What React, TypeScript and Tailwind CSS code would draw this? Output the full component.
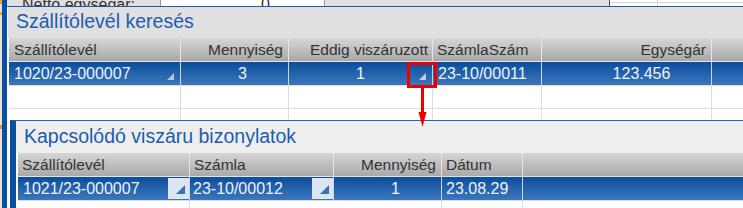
import React from "react";

function Tri({ className, size = 7 }: { className: string; size?: number }) {
  return (
    <svg width={size} height={size} viewBox={`0 0 ${size} ${size}`} className={className}>
      <polygon points={`${size},0 ${size},${size} 0,${size}`} fill="currentColor" />
    </svg>
  );
}

const hdr =
  "h-full flex items-center border-r border-[#e6e6e6] bg-gradient-to-b from-[#d6d6d6] to-[#a9a9a9] text-[15.5px] text-[#333]";
const cell =
  "relative h-full flex items-center border-r border-[#c9d6e6] bg-gradient-to-b from-[#0a4d9c] to-[#3a77bc] text-[16px] text-[#eef2f8]";

function DropBtn() {
  return (
    <div className="absolute right-0 top-[1px] bottom-[1px] w-[21px] bg-[#dce6f2] flex items-end justify-end pr-[4px] pb-[5px]">
      <Tri className="text-[#3f6db5]" size={9} />
    </div>
  );
}

export default function App() {
  return (
    <div className="relative w-[743px] h-[208px] overflow-hidden bg-white font-['Liberation_Sans',Arial,sans-serif] flex">
      {/* left edge */}
      <div className="flex h-full shrink-0">
        <div className="w-[2px] h-full bg-[#e6e2da] flex flex-col">
          <div className="h-[4px] bg-[#e9a04a]" />
          <div className="h-[8px]" />
          <div className="h-[3px] bg-[#e9a04a]" />
          <div className="h-[110px]" />
          <div className="h-[4px] bg-[#d9954a]" />
        </div>
        <div className="w-[5px] h-full bg-[#0b4f9f]" />
      </div>

      <div className="flex-1 flex flex-col min-w-0">
        {/* top strip */}
        <div className="h-[7px] flex border-b border-[#1f5aa8] bg-[#e0e0e0] overflow-hidden shrink-0">
          <div className="w-[153px] h-[6px] overflow-hidden pl-[15px]">
            <div className="text-[16px] text-[#333] leading-[18px] mt-[-4px] whitespace-nowrap">Nettó egységár:</div>
          </div>
          <div className="w-[165px] h-[6px] overflow-hidden bg-white border-x border-[#9a9a9a] flex justify-end pr-[54px]">
            <div className="text-[16px] text-[#333] leading-[18px] mt-[-4px]">0</div>
          </div>
          <div className="w-[284px]" />
          <div className="w-[1px] bg-[#1f5aa8]" />
          <div className="flex-1 bg-white flex flex-col">
            <div className="h-[3px] border-b border-[#d6d6d6] flex">
              <div className="w-[48px] border-r border-[#d6d6d6]" />
            </div>
            <div className="flex-1 flex">
              <div className="w-[48px] border-r border-[#d6d6d6]" />
            </div>
          </div>
        </div>

        {/* top panel */}
        <div className="ml-[1px] h-[113px] flex flex-col shrink-0">
          <div className="h-[31px] bg-[#e0e0e0] flex items-center pl-[8px] pb-[1px] text-[19.5px] text-[#1c5cae]">
            Szállítólevél keresés
          </div>
          <div className="pl-[1px] flex flex-col">
            <div className="h-[23px] flex">
              <div className={`${hdr} w-[172px] pl-[5px]`}>Szállítólevél</div>
              <div className={`${hdr} w-[108px] justify-end pr-[5px]`}>Mennyiség</div>
              <div className={`${hdr} w-[144px] justify-end pr-[4px]`}>Eddig viszáruzott</div>
              <div className={`${hdr} w-[109px] pl-[4px]`}>SzámlaSzám</div>
              <div className={`${hdr} w-[170px] justify-end pr-[5px]`}>Egységár</div>
              <div className={`${hdr} flex-1 border-r-0`} />
            </div>
            <div className="h-[24px] flex border-t border-[#dfe6ef]">
              <div className={`${cell} w-[172px] pl-[5px]`}>
                1020/23-000007
                <Tri className="absolute right-[6px] bottom-[5px] text-[#b9c5d3]" />
              </div>
              <div className={`${cell} w-[108px] justify-center pl-[16px]`}>3</div>
              <div className={`${cell} w-[144px] justify-center`}>
                1
                <Tri className="absolute right-[6px] bottom-[5px] text-[#c8ced6]" />
              </div>
              <div className={`${cell} w-[109px] pl-[5px]`}>23-10/00011</div>
              <div className={`${cell} w-[170px] justify-center pl-[30px]`}>123.456</div>
              <div className={`${cell} flex-1 border-r-0`} />
            </div>
            <div className="h-[24px] flex border-t border-[#dcdcdc] border-b">
              <div className="w-[172px] border-r border-[#dcdcdc]" />
              <div className="w-[108px] border-r border-[#dcdcdc]" />
              <div className="w-[144px] border-r border-[#dcdcdc]" />
              <div className="w-[109px] border-r border-[#dcdcdc]" />
              <div className="w-[170px] border-r border-[#dcdcdc]" />
            </div>
            <div className="h-[10px] flex">
              <div className="w-[172px] border-r border-[#dcdcdc]" />
              <div className="w-[108px] border-r border-[#dcdcdc]" />
              <div className="w-[144px] border-r border-[#dcdcdc]" />
              <div className="w-[109px] border-r border-[#dcdcdc]" />
              <div className="w-[170px] border-r border-[#dcdcdc]" />
            </div>
          </div>
        </div>

        {/* second panel */}
        <div className="flex-1 flex min-h-0">
          <div className="w-[3px] bg-white" />
          <div className="flex-1 flex flex-col border-l-[6px] border-t border-[#0b4f9f] border-t-[#2a62ac]">
            <div className="h-[32px] bg-[#eeeeee] flex items-center pl-[8px] pb-[1px] text-[19.5px] text-[#1c5cae] shrink-0">
              Kapcsolódó viszáru bizonylatok
            </div>
            <div className="pl-[2px] flex flex-col flex-1">
              <div className="h-[23px] flex shrink-0">
                <div className={`${hdr} w-[172px] pl-[4px]`}>Szállítólevél</div>
                <div className={`${hdr} w-[144px] pl-[4px]`}>Számla</div>
                <div className={`${hdr} w-[108px] justify-end pr-[5px]`}>Mennyiség</div>
                <div className={`${hdr} w-[81px] pl-[4px]`}>Dátum</div>
                <div className={`${hdr} flex-1 border-r-0`} />
              </div>
              <div className="h-[24px] flex border-t border-[#dfe6ef] shrink-0">
                <div className={`${cell} w-[172px] pl-[5px]`}>
                  1021/23-000007
                  <DropBtn />
                </div>
                <div className={`${cell} w-[144px] pl-[3px]`}>
                  23-10/00012
                  <DropBtn />
                </div>
                <div className={`${cell} w-[108px] justify-center pl-[16px]`}>1</div>
                <div className={`${cell} w-[81px] pl-[4px]`}>23.08.29</div>
                <div className={`${cell} flex-1 border-r-0`} />
              </div>
              <div className="flex-1 flex border-t border-[#dcdcdc]">
                <div className="w-[172px] border-r border-[#dcdcdc]" />
                <div className="w-[144px] border-r border-transparent" />
                <div className="w-[108px] border-r border-[#dcdcdc]" />
                <div className="w-[81px] border-r border-[#dcdcdc]" />
              </div>
            </div>
          </div>
        </div>
      </div>

      {/* red highlight box */}
      <div className="absolute left-[407px] top-[62px] w-[30px] h-[26px] border-[3px] border-[#ee0000]" />
      {/* red arrow */}
      <svg className="absolute left-[417px] top-[88px]" width="11" height="40" viewBox="0 0 11 40">
        <rect x="4" y="0" width="3" height="26" fill="#ee0000" />
        <polygon points="1.5,24 9.5,24 5.5,39" fill="#ee0000" />
      </svg>
    </div>
  );
}
